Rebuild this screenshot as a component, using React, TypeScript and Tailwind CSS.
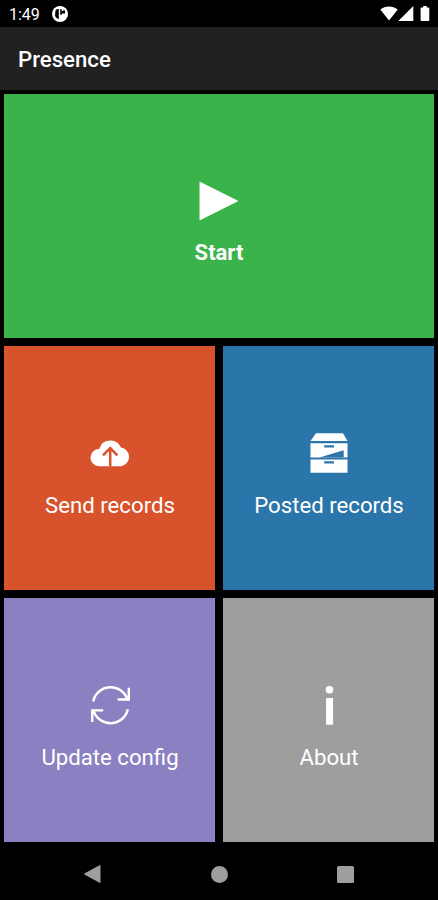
import type { ReactNode } from "react"

interface TileProps {
  label: string
  color: string
  icon: ReactNode
  labelClass?: string
}

function Icon({ children }: { children: ReactNode }) {
  return (
    <svg viewBox="0 0 40 40" className="h-10 w-10 overflow-visible" fill="#fff">
      {children}
    </svg>
  )
}

function Tile({ label, color, icon, labelClass = "pl-px text-[22.2px]" }: TileProps) {
  return (
    <button className={`flex h-[244px] flex-col items-center pt-[87px] text-white ${color}`}>
      {icon}
      <span className={`mt-[17px] leading-[30px] whitespace-nowrap ${labelClass}`}>{label}</span>
    </button>
  )
}

function StatusBar() {
  return (
    <div className="flex h-[27px] items-center pt-px pr-[7px] pl-[9px] text-white">
      <span className="w-[43px] pt-px text-[16px] leading-none">1:49</span>
      <svg viewBox="0 0 16 16" className="h-4 w-4">
        <circle cx="8" cy="8" r="8" fill="#fff" />
        <path d="M3.6 4.6Q4.2 3 5.6 3h1.2v10Q3.4 12 3 9z" fill="#000" />
        <path d="M8.2 3h1.4v2h1.8V3.4l1.6 1.4v2.6H9.8v1.4H8.2z" fill="#000" />
      </svg>
      <svg viewBox="0 0 52 16" className="ml-auto h-4 w-[52px]" fill="#fff">
        <path d="M1.3 3.6C6.4-.6 13.6-.6 18.7 3.6L10 14.6z" />
        <path d="M34.3 0v15H19.3z" />
        <path d="M42.4 1.5h1.8V0h3.5v1.5h1.8q.8 0 .8.8v11.9q0 .8-.8.8h-7.1q-.8 0-.8-.8V2.3q0-.8.8-.8z" />
      </svg>
    </div>
  )
}

function NavBar() {
  return (
    <div className="grid flex-1 grid-cols-[84px_126px_127px_1fr] items-center pt-[6px]">
      <span />
      <svg viewBox="0 0 18 18" className="h-[18px] w-[18px]" fill="#9e9e9e">
        <path d="M.8 8.2 15.5.2q1-.4 1 .6v16.4q0 1-1 .6L.8 9.8q-1-.8 0-1.6z" />
      </svg>
      <span className="ml-[1px] h-[17px] w-[17px] rounded-full bg-[#9e9e9e]" />
      <span className="h-[17px] w-[17px] rounded-[1.5px] bg-[#9e9e9e]" />
    </div>
  )
}

export default function App() {
  return (
    <div className="flex h-[900px] w-[438px] flex-col overflow-hidden bg-black font-['Roboto','Liberation_Sans',sans-serif]">
      <StatusBar />
      <header className="flex h-[63px] items-center bg-[#212121] pl-[18px]">
        <h1 className="pt-[3px] text-[22.2px] font-medium text-white">Presence</h1>
      </header>
      <main className="flex flex-col gap-2 px-1 pt-1">
        <Tile
          label="Start"
          color="bg-[#39b34a]"
          labelClass="text-[22px] font-bold"
          icon={
            <Icon>
              <path d="M.5.5 39.5 20 .5 39.5z" />
            </Icon>
          }
        />
        <div className="grid grid-cols-2 gap-2">
          <Tile
            label="Send records"
            color="bg-[#d8522b]"
            icon={
              <Icon>
                <path d="M9 33.2A8.6 8.6 0 0 1 9.2 16 11.6 11.6 0 0 1 31 14.6 9.4 9.4 0 0 1 31 33.2z" />
                <path d="M20.2 33.2V15.5M13 22.3l7.2-7.2 7.2 7.2" fill="none" stroke="#d8522b" strokeWidth="2.5" />
              </Icon>
            }
          />
          <Tile
            label="Posted records"
            color="bg-[#2a75a9]"
            icon={
              <Icon>
                <path d="M7 .2h27l4.5 7.9h-37z" />
                <path d="M1.5 10.3h37v14.2h-37z" />
                <path d="M1.5 26.4h37v13.3h-37z" />
                <path d="M15.2 12.3h9.8v2.3h-9.8zM15.2 28.2h9.8v2.3h-9.8zM10.5 24.6l24.2-7.3v7.3z" fill="#2a75a9" />
              </Icon>
            }
          />
          <Tile
            label="Update config"
            color="bg-[#8b80c1]"
            icon={
              <Icon>
                <g fill="none" stroke="#fff" strokeWidth="2.4">
                  <path d="M3.2 16.5A17.7 17.7 0 0 1 37.4 14.5M38.8 2.7v11.8H27.6" />
                  <path d="M37.8 24.2A17.7 17.7 0 0 1 3.6 25.9M2.2 37V25.4h11" />
                </g>
              </Icon>
            }
          />
          <Tile
            label="About"
            color="bg-[#9e9e9e]"
            icon={
              <Icon>
                <circle cx="20.5" cy="4.8" r="3.8" />
                <path d="M17.1 13h7v26.7h-7z" />
              </Icon>
            }
          />
        </div>
      </main>
      <NavBar />
    </div>
  )
}
